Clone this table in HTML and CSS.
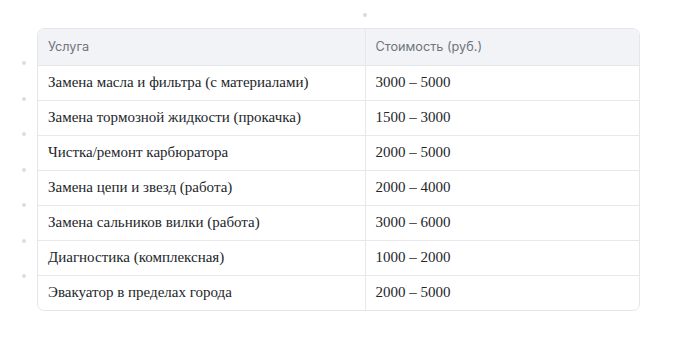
FILE: index.html
```html
<!DOCTYPE html>
<html lang="ru">
<head>
<meta charset="utf-8">
<link rel="stylesheet" href="styles.css">
</head>
<body>
<div class="page">
  <span class="dot dot-top"></span>
  <ul class="dots">
    <li></li><li></li><li></li><li></li><li></li><li></li><li></li>
  </ul>
  <div class="table-wrap">
    <table class="prices">
      <thead>
        <tr><th>Услуга</th><th>Стоимость (руб.)</th></tr>
      </thead>
      <tbody>
        <tr><td>Замена масла и фильтра (с материалами)</td><td>3000 – 5000</td></tr>
        <tr><td>Замена тормозной жидкости (прокачка)</td><td>1500 – 3000</td></tr>
        <tr><td>Чистка/ремонт карбюратора</td><td>2000 – 5000</td></tr>
        <tr><td>Замена цепи и звезд (работа)</td><td>2000 – 4000</td></tr>
        <tr><td>Замена сальников вилки (работа)</td><td>3000 – 6000</td></tr>
        <tr><td>Диагностика (комплексная)</td><td>1000 – 2000</td></tr>
        <tr><td>Эвакуатор в пределах города</td><td>2000 – 5000</td></tr>
      </tbody>
    </table>
  </div>
</div>
</body>
</html>
```
FILE: styles.css
```css
* { box-sizing: border-box; }
html, body { margin: 0; padding: 0; background: #ffffff; }
.page {
  position: relative;
  width: 674px;
  height: 343px;
  padding: 28px 0 0 37px;
}
.dot {
  position: absolute;
  width: 4px;
  height: 4px;
  border-radius: 50%;
  background: #d9dbe0;
}
.dot-top { left: 363px; top: 13px; }
.dots {
  position: absolute;
  left: 22px;
  top: 61px;
  margin: 0;
  padding: 0;
  list-style: none;
  display: flex;
  flex-direction: column;
  gap: 31.5px;
}
.dots li {
  width: 4px;
  height: 4px;
  border-radius: 50%;
  background: #dcdee3;
}
.table-wrap {
  width: 603px;
  border: 1px solid #e4e6ea;
  border-radius: 7px;
  overflow: hidden;
}
.prices {
  width: 100%;
  border-collapse: collapse;
  table-layout: fixed;
}
.prices th:first-child, .prices td:first-child { width: 327px; }
.prices th {
  background: #f2f3f6;
  font-family: "Inter", "Noto Sans", sans-serif;
  font-weight: 400;
  font-size: 12.7px;
  color: #6f747d;
  text-align: left;
  height: 36px;
  padding: 0 10px;
  border-bottom: 1px solid #e4e6ea;
}
.prices td {
  font-family: "Liberation Serif", "DejaVu Serif", serif;
  font-size: 15px;
  color: #23262b;
  height: 35px;
  padding: 0 10px;
  border-bottom: 1px solid #e7e8eb;
}
.prices tr > *:first-child { border-right: 1px solid #e7e8eb; }
.prices tbody tr:last-child td { border-bottom: none; }
```
